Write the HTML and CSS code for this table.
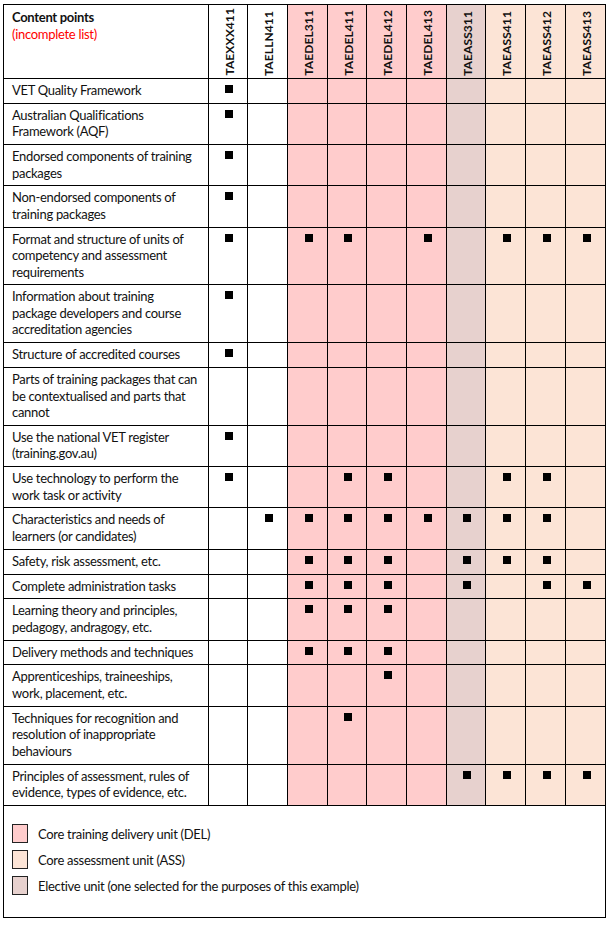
FILE: index.html
```html
<!DOCTYPE html>
<html>
<head>
<meta charset="utf-8">
<link rel="stylesheet" href="styles.css">
</head>
<body>
<table class="grid">
  <colgroup>
    <col class="c-first">
    <col class="c-w39">
    <col class="c-w40">
    <col class="c-w40 del">
    <col class="c-w39 del">
    <col class="c-w40 del">
    <col class="c-w40 del">
    <col class="c-w39 ele">
    <col class="c-w40 ass">
    <col class="c-w40 ass">
    <col class="c-w40 ass">
  </colgroup>
  <thead>
    <tr class="head">
      <th class="title"><div class="t1">Content points</div><div class="t2">(incomplete list)</div></th>
      <th class="vh"><span>TAEXXX411</span></th>
      <th class="vh"><span>TAELLN411</span></th>
      <th class="vh"><span>TAEDEL311</span></th>
      <th class="vh"><span>TAEDEL411</span></th>
      <th class="vh"><span>TAEDEL412</span></th>
      <th class="vh"><span>TAEDEL413</span></th>
      <th class="vh"><span>TAEASS311</span></th>
      <th class="vh"><span>TAEASS411</span></th>
      <th class="vh"><span>TAEASS412</span></th>
      <th class="vh"><span>TAEASS413</span></th>
    </tr>
  </thead>
  <tbody>
    <tr><td class="lbl">VET Quality Framework</td><td><span class="m"></span></td><td></td><td></td><td></td><td></td><td></td><td></td><td></td><td></td><td></td></tr>
    <tr><td class="lbl">Australian Qualifications<br>Framework (AQF)</td><td><span class="m"></span></td><td></td><td></td><td></td><td></td><td></td><td></td><td></td><td></td><td></td></tr>
    <tr><td class="lbl">Endorsed components of training<br>packages</td><td><span class="m"></span></td><td></td><td></td><td></td><td></td><td></td><td></td><td></td><td></td><td></td></tr>
    <tr><td class="lbl">Non-endorsed components of<br>training packages</td><td><span class="m"></span></td><td></td><td></td><td></td><td></td><td></td><td></td><td></td><td></td><td></td></tr>
    <tr><td class="lbl">Format and structure of units of<br>competency and assessment<br>requirements</td><td><span class="m"></span></td><td></td><td><span class="m"></span></td><td><span class="m"></span></td><td></td><td><span class="m"></span></td><td></td><td><span class="m"></span></td><td><span class="m"></span></td><td><span class="m"></span></td></tr>
    <tr><td class="lbl">Information about training<br>package developers and course<br>accreditation agencies</td><td><span class="m"></span></td><td></td><td></td><td></td><td></td><td></td><td></td><td></td><td></td><td></td></tr>
    <tr><td class="lbl">Structure of accredited courses</td><td><span class="m"></span></td><td></td><td></td><td></td><td></td><td></td><td></td><td></td><td></td><td></td></tr>
    <tr><td class="lbl">Parts of training packages that can<br>be contextualised and parts that<br>cannot</td><td></td><td></td><td></td><td></td><td></td><td></td><td></td><td></td><td></td><td></td></tr>
    <tr><td class="lbl">Use the national VET register<br>(training.gov.au)</td><td><span class="m"></span></td><td></td><td></td><td></td><td></td><td></td><td></td><td></td><td></td><td></td></tr>
    <tr><td class="lbl">Use technology to perform the<br>work task or activity</td><td><span class="m"></span></td><td></td><td></td><td><span class="m"></span></td><td><span class="m"></span></td><td></td><td></td><td><span class="m"></span></td><td><span class="m"></span></td><td></td></tr>
    <tr><td class="lbl">Characteristics and needs of<br>learners (or candidates)</td><td></td><td><span class="m"></span></td><td><span class="m"></span></td><td><span class="m"></span></td><td><span class="m"></span></td><td><span class="m"></span></td><td><span class="m"></span></td><td><span class="m"></span></td><td><span class="m"></span></td><td></td></tr>
    <tr><td class="lbl">Safety, risk assessment, etc.</td><td></td><td></td><td><span class="m"></span></td><td><span class="m"></span></td><td><span class="m"></span></td><td></td><td><span class="m"></span></td><td><span class="m"></span></td><td><span class="m"></span></td><td></td></tr>
    <tr><td class="lbl">Complete administration tasks</td><td></td><td></td><td><span class="m"></span></td><td><span class="m"></span></td><td><span class="m"></span></td><td></td><td><span class="m"></span></td><td></td><td><span class="m"></span></td><td><span class="m"></span></td></tr>
    <tr><td class="lbl">Learning theory and principles,<br>pedagogy, andragogy, etc.</td><td></td><td></td><td><span class="m"></span></td><td><span class="m"></span></td><td><span class="m"></span></td><td></td><td></td><td></td><td></td><td></td></tr>
    <tr><td class="lbl">Delivery methods and techniques</td><td></td><td></td><td><span class="m"></span></td><td><span class="m"></span></td><td><span class="m"></span></td><td></td><td></td><td></td><td></td><td></td></tr>
    <tr><td class="lbl">Apprenticeships, traineeships,<br>work, placement, etc.</td><td></td><td></td><td></td><td></td><td><span class="m"></span></td><td></td><td></td><td></td><td></td><td></td></tr>
    <tr><td class="lbl">Techniques for recognition and<br>resolution of inappropriate<br>behaviours</td><td></td><td></td><td></td><td><span class="m"></span></td><td></td><td></td><td></td><td></td><td></td><td></td></tr>
    <tr><td class="lbl">Principles of assessment, rules of<br>evidence, types of evidence, etc.</td><td></td><td></td><td></td><td></td><td></td><td></td><td><span class="m"></span></td><td><span class="m"></span></td><td><span class="m"></span></td><td><span class="m"></span></td></tr>
    <tr class="legend-row">
      <td colspan="11" class="legend">
        <div class="key"><span class="sw sw-del"></span><span>Core training delivery unit (DEL)</span></div>
        <div class="key"><span class="sw sw-ass"></span><span>Core assessment unit (ASS)</span></div>
        <div class="key"><span class="sw sw-ele"></span><span>Elective unit (one selected for the purposes of this example)</span></div>
      </td>
    </tr>
  </tbody>
</table>
</body>
</html>
```
FILE: styles.css
```css
html, body {
  margin: 0;
  padding: 0;
  background: #fff;
}
body {
  padding: 4px 3px;
  font-family: Lato, "Noto Sans", sans-serif;
  font-size: 13px;
  letter-spacing: -0.3px;
  color: #111;
}
.grid {
  border-collapse: collapse;
  table-layout: fixed;
  width: 602px;
}
.c-first { width: 205px; }
.c-w39 { width: 39px; }
.c-w40 { width: 40px; }
.del { background: #ffcccc; }
.ass { background: #fce4d6; }
.ele { background: #e7d1ce; }

.grid th, .grid td {
  border: 1px solid #000;
  padding: 3px 6px 4.3px 8px;
  line-height: 16.5px;
  vertical-align: top;
}
.grid td {
  text-align: center;
  padding-left: 0;
  padding-right: 0;
}
.grid td.lbl {
  text-align: left;
  padding-left: 8px;
  padding-right: 2px;
  white-space: nowrap;
}
.head {
  height: 74px;
}
.grid th.title {
  text-align: left;
  vertical-align: top;
  padding: 4px 8px 0;
}
.t1 {
  font-weight: 700;
  line-height: 17px;
}
.t2 {
  font-weight: 400;
  color: #ff0000;
  line-height: 17px;
}
.grid th.vh {
  vertical-align: bottom;
  text-align: center;
  padding: 0 0 1px;
  line-height: 12px;
}
.vh span {
  display: inline-block;
  writing-mode: vertical-rl;
  transform: rotate(180deg);
  font-weight: 700;
  font-size: 12px;
  line-height: 14px;
  letter-spacing: 0.1px;
  margin-left: 3px;
}
.m {
  display: inline-block;
  width: 8px;
  height: 8px;
  background: #000;
  margin-top: 3px;
  margin-left: 2px;
  vertical-align: top;
}
.grid td.legend {
  background: #fff;
  text-align: left;
  padding: 15px 8px 18px 8px;
}
.key {
  display: flex;
  align-items: center;
  gap: 10px;
  height: 26px;
  line-height: 18px;
}
.sw {
  display: inline-block;
  width: 14px;
  height: 17px;
  border: 1px solid #222;
  flex: none;
}
.sw-del { background: #ffcccc; }
.sw-ass { background: #fce4d6; }
.sw-ele { background: #e7d1ce; }
```
